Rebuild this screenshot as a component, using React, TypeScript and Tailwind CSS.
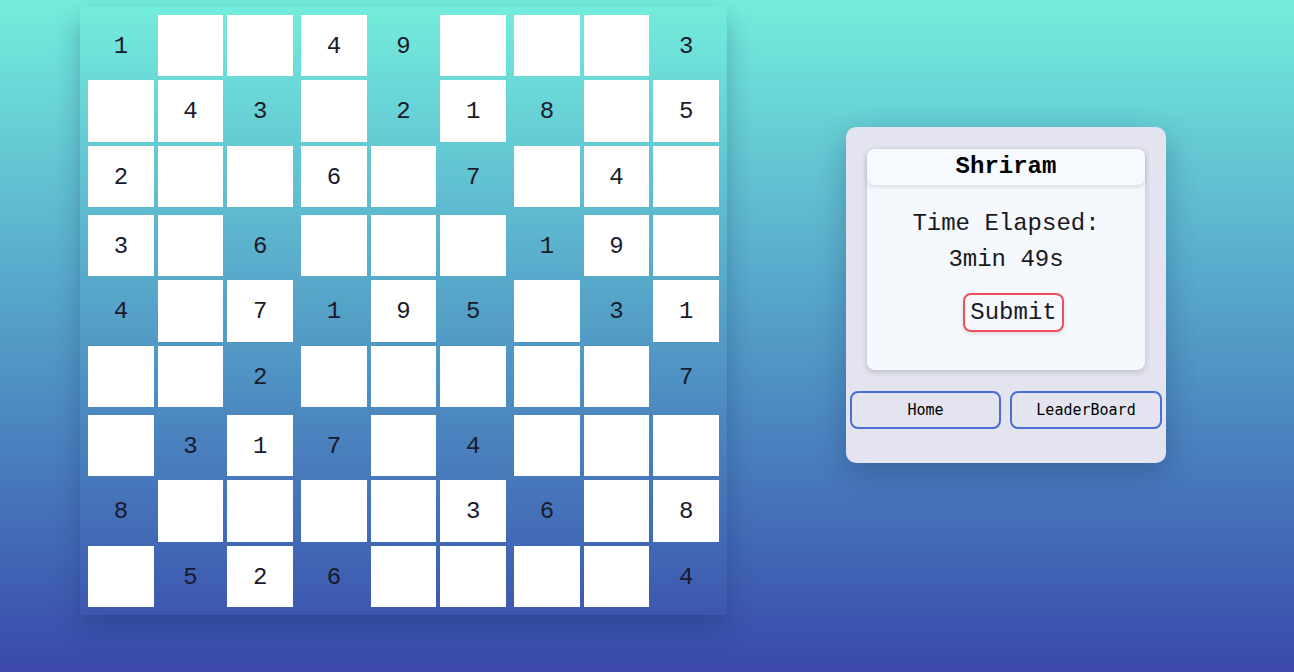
const board: { v: string; w: boolean }[][] = [
  ['1T', 'W', 'W', '4W', '9T', 'W', 'W', 'W', '3T'],
  ['W', '4W', '3T', 'W', '2T', '1W', '8T', 'W', '5W'],
  ['2W', 'W', 'W', '6W', 'W', '7T', 'W', '4W', 'W'],
  ['3W', 'W', '6T', 'W', 'W', 'W', '1T', '9W', 'W'],
  ['4T', 'W', '7W', '1T', '9W', '5T', 'W', '3T', '1W'],
  ['W', 'W', '2T', 'W', 'W', 'W', 'W', 'W', '7T'],
  ['W', '3T', '1W', '7T', 'W', '4T', 'W', 'W', 'W'],
  ['8T', 'W', 'W', 'W', 'W', '3W', '6T', 'W', '8W'],
  ['W', '5T', '2W', '6T', 'W', 'W', 'W', 'W', '4T'],
].map((row) =>
  row.map((c) => ({ v: c.length > 1 ? c[0] : '', w: c.endsWith('W') }))
)

const mono = { fontFamily: '"Liberation Mono", "Courier New", monospace' }

const Cell = ({ v, w }: { v: string; w: boolean }) => (
  <div
    className={`flex items-center justify-center pt-[3px] text-2xl text-[#1a1a2a] ${w ? 'bg-white' : ''}`}
    style={mono}
  >
    {v}
  </div>
)

const Box = ({ br, bc }: { br: number; bc: number }) => (
  <div className="grid grid-cols-3 grid-rows-3 gap-1 w-[205px] h-[192px]">
    {[0, 1, 2].map((r) =>
      [0, 1, 2].map((c) => {
        const cell = board[br * 3 + r][bc * 3 + c]
        return <Cell key={`${r}-${c}`} v={cell.v} w={cell.w} />
      })
    )}
  </div>
)

export default function App() {
  return (
    <div className="h-[672px] w-full bg-gradient-to-b from-[#74eedc] to-[#3a48aa] flex items-start pl-[80px] pt-[7px]">
      {/* board */}
      <div className="p-2 grid grid-cols-3 gap-2 shadow-[0_12px_24px_rgba(20,40,90,0.3)]">
        {[0, 1, 2].map((br) =>
          [0, 1, 2].map((bc) => <Box key={`${br}-${bc}`} br={br} bc={bc} />)
        )}
      </div>

      {/* side card */}
      <div className="ml-[119px] mt-[120px] w-[320px] bg-[#e3e4f0] rounded-[10px] px-1 pt-[22px] pb-[34px] shadow-[0_10px_30px_rgba(20,40,90,0.3)]">
        <div className="mx-[17px] bg-[#f5f8fc] rounded-lg shadow-[0_2px_6px_rgba(0,0,0,0.18)] pb-[38px]">
          <div
            className="bg-[#f6f9fd] rounded-lg text-center text-2xl font-bold leading-9 text-black shadow-[0_2px_5px_rgba(0,0,0,0.12)]"
            style={mono}
          >
            Shriram
          </div>
          <div className="pt-[21px] text-center text-2xl leading-9 text-[#1a1a1a]" style={mono}>
            <div>Time Elapsed:</div>
            <div>3min 49s</div>
          </div>
          <div className="flex justify-center mt-[15px]">
            <button
              className="ml-[15px] border-2 border-[#ef4f57] rounded-lg px-[5px] py-[2px] text-2xl leading-[31px] text-[#1a1a2a] bg-[#f5f8fc] shadow-[0_2px_4px_rgba(0,0,0,0.12)]"
              style={mono}
            >
              Submit
            </button>
          </div>
        </div>
        <div
          className="flex gap-[9px] mt-[21px]"
          style={{ fontFamily: '"DejaVu Sans Mono", monospace' }}
        >
          <button className="w-[151px] h-[38px] border-2 border-[#4a6cd6] rounded-lg text-[15px] text-black">
            Home
          </button>
          <button className="w-[152px] h-[38px] border-2 border-[#4a6cd6] rounded-lg text-[15px] text-black">
            LeaderBoard
          </button>
        </div>
      </div>
    </div>
  )
}
